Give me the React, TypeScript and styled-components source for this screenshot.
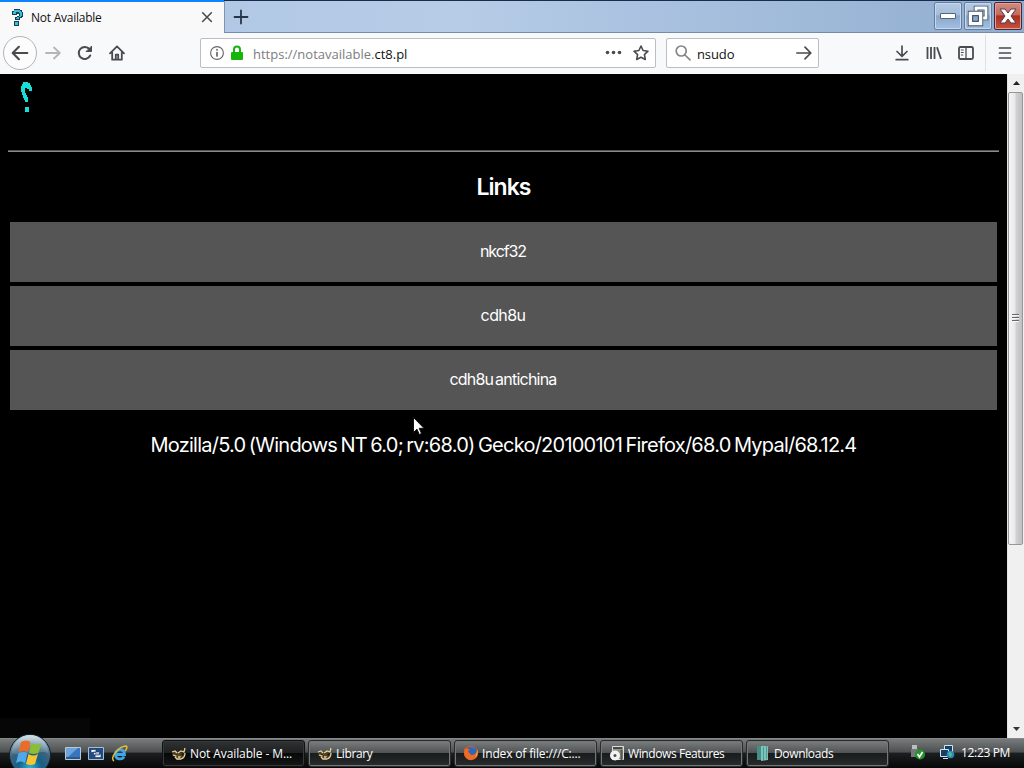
import { ReactNode } from 'react';
import styled, { createGlobalStyle } from 'styled-components';

const GlobalStyle = createGlobalStyle`
	* {
		box-sizing: border-box;
	}
	body {
		margin: 0;
		background: #000;
		overflow: hidden;
		font-family: 'Open Sans', 'Noto Sans', sans-serif;
	}
	svg {
		display: block;
		flex: none;
	}
`;

const Screen = styled.div`
	position: relative;
	display: flex;
	flex-direction: column;
	width: 1024px;
	height: 768px;
	overflow: hidden;
	background: #000;
`;

const Text = styled.span<{ $size?: number; $spacing?: number; $color?: string }>`
	font-size: ${(p) => p.$size ?? 12}px;
	letter-spacing: ${(p) => p.$spacing ?? 0}px;
	color: ${(p) => p.$color ?? '#111'};
	white-space: pre;
`;

/* browser chrome */

const TabStrip = styled.div`
	display: flex;
	height: 33px;
	background: linear-gradient(90deg, #aec6e4 0%, #b6cce7 45%, #a0bad9 78%, #8fadd0 100%);
	border-top: 1px solid #172c4e;
	border-bottom: 1px solid #758ba6;
`;

const Tab = styled.div`
	display: flex;
	align-items: center;
	width: 224px;
	height: 33px;
	margin-top: -1px;
	padding: 0 10px 0 9px;
	background: #f9f9fa;
	border-top: 2px solid #0a84ff;
`;

const TabTitle = styled.div`
	flex: 1;
	padding-left: 6px;
	line-height: 28px;
	margin-top: -2px;
`;

const NewTab = styled.div`
	display: flex;
	align-items: center;
	justify-content: center;
	width: 33px;
	height: 31px;
	border-left: 1px solid #7e94b1;
`;

const WindowControls = styled.div`
	display: flex;
	gap: 2px;
	margin: 1px 2px 0 auto;
`;

const WindowButton = styled.div<{ $close?: boolean }>`
	display: flex;
	align-items: center;
	justify-content: center;
	width: 28px;
	height: 28px;
	border: 1px solid ${(p) => (p.$close ? '#4d2430' : '#657c9b')};
	border-radius: 2px;
	box-shadow: inset 0 0 0 1px ${(p) => (p.$close ? '#dba29c' : '#c7d9ec')};
	background: ${(p) =>
		p.$close
			? 'linear-gradient(#cf8c82 0%, #c46a5d 45%, #a92f20 50%, #c4523e 100%)'
			: 'linear-gradient(#b5cae2 0%, #a3bddc 45%, #87a7cd 50%, #a3c0e0 100%)'};
`;

const NavBar = styled.div`
	display: flex;
	align-items: center;
	height: 41px;
	padding: 0 0 2px 3px;
	background: #f8f9fa;
`;

const BackButton = styled.div`
	display: flex;
	align-items: center;
	justify-content: center;
	width: 34px;
	height: 34px;
	border: 1px solid #b4b4b6;
	border-radius: 50%;
	background: #fcfcfd;
`;

const NavIcon = styled.div<{ $width?: number }>`
	display: flex;
	align-items: center;
	justify-content: center;
	width: ${(p) => p.$width ?? 32}px;
	height: 32px;
`;

const Field = styled.div<{ $width: number; $left: number }>`
	display: flex;
	align-items: center;
	width: ${(p) => p.$width}px;
	height: 30px;
	margin-left: ${(p) => p.$left}px;
	padding: 0 6px 0 8px;
	border: 1px solid #bebec1;
	border-radius: 2px;
	background: #fff;
`;

const FieldText = styled.div<{ $left: number }>`
	flex: 1;
	padding: 2px 0 0 ${(p) => p.$left}px;
	line-height: 28px;
`;

const RightTools = styled.div`
	display: flex;
	align-items: center;
	height: 39px;
	margin-left: auto;
`;

const MenuCell = styled.div`
	display: flex;
	align-items: center;
	justify-content: center;
	width: 39px;
	height: 36px;
	margin-left: 3px;
	border-left: 1px solid #dfe0e2;
`;

/* page */

const Viewport = styled.div`
	display: flex;
	height: 664px;
`;

const Page = styled.main`
	flex: 1;
	padding: 8px;
	background: #000;
	color: #fff;
	text-align: center;
	font-family: Inter, 'Liberation Sans', sans-serif;
`;

const Logo = styled.div`
	height: 68px;
	padding: 0 0 0 11px;
`;

const Rule = styled.hr`
	height: 2px;
	margin: 0;
	border: 0;
	border-top: 1px solid #555;
	border-bottom: 1px solid #8a8a8a;
`;

const Title = styled.h2`
	margin: 20px 0 20px;
	font-size: 23px;
	font-weight: 600;
	line-height: 30px;
	letter-spacing: -1px;
`;

const LinkList = styled.div`
	display: flex;
	flex-direction: column;
	gap: 4px;
	padding: 0 2px;
`;

const LinkButton = styled.div<{ $spacing: number }>`
	height: 60px;
	padding-right: 1px;
	background: #555;
	font-size: 16px;
	line-height: 59px;
	letter-spacing: ${(p) => p.$spacing}px;
	word-spacing: -2px;
`;

const UserAgent = styled.p`
	margin: 20px 0 0;
	font-size: 20px;
	line-height: 31px;
	letter-spacing: -0.76px;
	word-spacing: -1.5px;
	white-space: nowrap;
`;

const Scrollbar = styled.div`
	display: flex;
	flex-direction: column;
	width: 17px;
	background: #f0f0f0;
	border-left: 1px solid #e3e3e3;
`;

const ScrollArrow = styled.div`
	display: flex;
	align-items: center;
	justify-content: center;
	height: 18px;
`;

const Thumb = styled.div`
	display: flex;
	align-items: center;
	justify-content: center;
	height: 453px;
	margin-right: 1px;
	border: 1px solid #979797;
	border-radius: 2px;
	background: linear-gradient(90deg, #f5f5f5 0%, #e9e9eb 45%, #d0d0d2 55%, #c0c0c4 100%);
`;

const Spacer = styled.div`
	flex: 1;
`;

/* taskbar */

const Taskbar = styled.footer`
	position: relative;
	display: flex;
	align-items: flex-start;
	height: 30px;
	padding-left: 65px;
	border-top: 1px solid #858889;
	background: linear-gradient(#777b7c 0%, #4e5152 44%, #1b1e1f 50%, #060808 100%);
`;

const StartOrb = styled.div`
	position: absolute;
	left: 8px;
	top: -6px;
`;

const QuickLaunch = styled.div`
	display: flex;
	gap: 7px;
	width: 97px;
	padding-top: 6px;
`;

const Tasks = styled.div`
	display: flex;
	gap: 3px;
	padding-top: 1px;
`;

const TaskButton = styled.div<{ $active?: boolean }>`
	display: flex;
	align-items: center;
	gap: 3px;
	width: 143px;
	height: 27px;
	padding: 0 0 1px 8px;
	border: 1px solid ${(p) => (p.$active ? '#111' : '#292c2d')};
	border-radius: 3px;
	box-shadow: inset 0 0 0 1px ${(p) => (p.$active ? '#36393a' : '#737778')};
	background: ${(p) =>
		p.$active
			? 'linear-gradient(#303334 0%, #1e2021 46%, #070808 50%, #151718 100%)'
			: 'linear-gradient(#7b7e7f 0%, #515455 46%, #191c1d 50%, #292c2d 100%)'};
`;

const Tray = styled.div`
	display: flex;
	align-items: center;
	gap: 13px;
	height: 25px;
	margin: 0 14px 0 auto;
`;

const Clock = styled.div`
	margin: -2px 0 0 -7px;
`;

const FadingStatus = styled.div`
	position: absolute;
	left: 0;
	top: 718px;
	width: 90px;
	height: 20px;
	background: #060606;
`;

const Cursor = styled.div`
	position: absolute;
	left: 413px;
	top: 417px;
`;

type IconProps = { size?: number; color?: string; width?: number; children: ReactNode };

const LineIcon = ({ size = 16, color = '#4a4a4f', width = 2, children }: IconProps) => (
	<svg
		width={size}
		height={size}
		viewBox="0 0 16 16"
		fill="none"
		stroke={color}
		strokeWidth={width}
		strokeLinecap="round"
		strokeLinejoin="round"
	>
		{children}
	</svg>
);

const Favicon = () => (
	<svg width="16" height="17" viewBox="0 0 16 17" shapeRendering="crispEdges">
		<path
			d="M5 0h6v1h2v2h1v5h-1v1h-2v2H6V8h2V7h2V5H8v1H3V2h2zM5 12h5v5H5z"
			fill="#17414e"
		/>
		<path
			d="M5 1h6v1h1v1h1v4h-1v1h-2v2H7V9h1V8h2V7h1V4h-1V3H7v2H4V3h1zM6 13h3v3H6z"
			fill="#38bfe0"
		/>
	</svg>
);

const PageLogo = () => (
	<svg width="15" height="31" viewBox="0 0 15 31" shapeRendering="crispEdges">
		<path
			d="M4 0h5v1h2v2h1v2h1v4h-3V7H8V6H6v5h1v2h1v2h1v5H6v-2H5v-2H4v-3H3v-3H2V4h1V2h1z"
			fill="#16dfd8"
		/>
		<path d="M6 25h4v5H6z" fill="#16dfd8" />
	</svg>
);

const CatIcon = () => (
	<svg width="16" height="16" viewBox="0 0 16 16">
		<path d="M2 7l4-1 3 2 4-1 1 4-3 3-5 1-2-3-3-2z" fill="#4d3f22" />
		<path
			d="M1 7l3-1 2 2M2 10l3 1 2-1M7 8l3-2 3 1 1-4M14 8c0 3-1 5-4 6H6l-2-2"
			stroke="#e6d09a"
			strokeWidth="1.3"
			fill="none"
		/>
		<path d="M5 9l2 1-1 2zM10 9l3-1-1 3z" fill="#17130c" />
		<path d="M7 11h3l-1 2H7z" fill="#c8b27a" />
	</svg>
);

const FirefoxIcon = () => (
	<svg width="16" height="16" viewBox="0 0 16 16">
		<circle cx="8" cy="8" r="7.2" fill="#e4571d" />
		<circle cx="8.6" cy="6.8" r="5.2" fill="#2b69b8" />
		<path d="M7 2a5 5 0 0 1 5 3 4 4 0 0 0-5-3" fill="#6bb7e6" />
		<path d="M2 3l2 1 3 0-2 2 2 3c2 2 5 1 7-3 1 6-3 9-7 9S-.5 9 2 3" fill="#ef6b22" />
		<path d="M14 4c1 3 1 6-2 9 2-4 2-6 2-9" fill="#fbc53c" />
	</svg>
);

const FeaturesIcon = () => (
	<svg width="16" height="16" viewBox="0 0 16 16">
		<path d="M3.5 1.5h11v13h-11z" fill="#8f9088" stroke="#deded6" />
		<path d="M4 2h9v2H4z" fill="#454b4b" />
		<path d="M11.5 5h2v10h-2z" fill="#56584f" />
		<circle cx="6" cy="10.5" r="5" fill="#f2f4f4" />
		<circle cx="6" cy="10.5" r="1.5" fill="#4a4d4e" />
	</svg>
);

const FolderIcon = () => (
	<svg width="16" height="16" viewBox="0 0 16 16">
		<path d="M2 1h5v14H2z" fill="#448e86" />
		<path d="M6 1h7v14l-7 1z" fill="#7fc3b8" />
		<path d="M8.5 2v13M11.5 1v13" stroke="#4b9b92" />
	</svg>
);

const StartLogo = () => (
	<svg width="44" height="44" viewBox="0 0 44 44">
		<defs>
			<radialGradient id="orb" cx="50%" cy="82%" r="75%">
				<stop offset="0" stopColor="#27b8df" />
				<stop offset="0.38" stopColor="#146089" />
				<stop offset="0.7" stopColor="#3e637d" />
				<stop offset="1" stopColor="#8ba7b7" />
			</radialGradient>
			<linearGradient id="gloss" x1="0" y1="0" x2="0" y2="1">
				<stop offset="0" stopColor="#dce8ee" stopOpacity="0.9" />
				<stop offset="1" stopColor="#8eaaba" stopOpacity="0.25" />
			</linearGradient>
		</defs>
		<circle cx="22" cy="22" r="20.5" fill="url(#orb)" stroke="#10202a" />
		<path d="M4 20a18 18 0 0 1 36 0c-10-4-26 5-36 0" fill="url(#gloss)" />
		<path d="M13 9q5-3 9.5 0l-2.5 10q-4-2-9.5 0z" fill="#ec6b26" />
		<path d="M23.5 10q5 3 10 0l-3 10q-5 2-9.5 0z" fill="#8bbd37" />
		<path d="M10.5 20q5-2 9 0l-2.5 10q-4-3-9 0z" fill="#54a8e8" />
		<path d="M20.5 21q5 3 9.5 0l-3 10q-4 2-9 0z" fill="#fac52c" />
	</svg>
);

const DesktopIcon = () => (
	<svg width="16" height="16" viewBox="0 0 16 16">
		<path d="M.5 2.5h15v12H.5z" fill="#3775bd" stroke="#b9c8d7" />
		<path d="M1 3h12L3 12H1z" fill="#6aa4db" />
		<path d="M1 13h14" stroke="#233d5e" />
	</svg>
);

const SwitcherIcon = () => (
	<svg width="16" height="16" viewBox="0 0 16 16">
		<path d="M.5 2.5h15v12H.5z" fill="#214b83" stroke="#a8bdd4" />
		<path
			d="M3 4.5h5v3H3zM5.5 7h6v3h-6zM7 9h6v3.5H7z"
			fill="#eff6fb"
			stroke="#203e69"
			strokeWidth=".7"
		/>
	</svg>
);

const ExplorerIcon = () => (
	<svg width="17" height="17" viewBox="0 0 17 17" fill="none">
		<path d="M4.5 9.5h9c0-7-9-6-9 0 0 5.5 7 5.5 8.5 2" stroke="#3fa6e8" strokeWidth="2.8" />
		<path d="M3 16C-2 13 8 1 15 1c2 1 0 4-1 5" stroke="#e8bd34" strokeWidth="1.5" />
	</svg>
);

const tasks = [
	{ title: 'Not Available - M...', icon: <CatIcon />, spacing: -0.1, active: true },
	{ title: 'Library', icon: <CatIcon />, spacing: -0.4 },
	{ title: 'Index of file:///C:...', icon: <FirefoxIcon />, spacing: -0.15 },
	{ title: 'Windows Features', icon: <FeaturesIcon />, spacing: -0.4 },
	{ title: 'Downloads', icon: <FolderIcon />, spacing: -0.35 },
];

const links = [
	{ label: 'nkcf32', spacing: -1.1 },
	{ label: 'cdh8u', spacing: -0.6 },
	{ label: 'cdh8u antichina', spacing: -0.77 },
];

const App = () => {
	return (
		<Screen>
			<GlobalStyle />
			<TabStrip>
				<Tab>
					<Favicon />
					<TabTitle>
						<Text $spacing={-0.25}>Not Available</Text>
					</TabTitle>
					<LineIcon size={14} width={1.8}>
						<path d="M3 2l10 10M13 2L3 12" />
					</LineIcon>
				</Tab>
				<NewTab>
					<LineIcon color="#273548" width={1.8}>
						<path d="M8 1.5v13M1.5 8h13" />
					</LineIcon>
				</NewTab>
				<WindowControls>
					<WindowButton>
						<svg width="18" height="8" viewBox="0 0 18 8">
							<path d="M1.5 1.5h15v5h-15z" fill="#fff" stroke="#56657a" />
						</svg>
					</WindowButton>
					<WindowButton>
						<svg width="22" height="22" viewBox="0 0 22 22" fill="none">
							<path d="M9 3h10v10H9z" stroke="#46566b" strokeWidth="4.6" />
							<path d="M9 3h10v10H9z" stroke="#fff" strokeWidth="2.8" />
							<path d="M3.5 8.5h10v10h-10z" fill="#8ba8c8" stroke="#46566b" strokeWidth="5.4" />
							<path d="M3.5 8.5h10v10h-10z" stroke="#fff" strokeWidth="3.6" />
							<path d="M5.5 10.5h6v6h-6z" stroke="#46566b" />
						</svg>
					</WindowButton>
					<WindowButton $close>
						<svg width="20" height="18" viewBox="0 0 20 18">
							<path
								d="M2 2h5l3 4 3-4h5l-5 7 5 7h-5l-3-4-3 4H2l5-7z"
								fill="#fff"
								stroke="#593c46"
							/>
						</svg>
					</WindowButton>
				</WindowControls>
			</TabStrip>
			<NavBar>
				<BackButton>
					<LineIcon size={18} width={1.9}>
						<path d="M14.5 8H1.8M7 2.5L1.5 8 7 13.5" />
					</LineIcon>
				</BackButton>
				<NavIcon>
					<LineIcon color="#b5b5b8" width={1.8}>
						<path d="M1 8h13.5M9 2.5L14.8 8 9 13.5" />
					</LineIcon>
				</NavIcon>
				<NavIcon>
					<LineIcon>
						<path d="M13.2 10.5A6 6 0 1 1 12.5 4.2" />
						<path d="M14.5 1.5v5h-5z" fill="#4a4a4f" strokeWidth="1" />
					</LineIcon>
				</NavIcon>
				<NavIcon>
					<LineIcon width={1.8}>
						<path d="M1 8.3L8 1.4l7 6.9M3.2 7.5v7.2h9.6V7.5" />
						<path d="M6.8 14V9.6h2.4V14" strokeWidth="1.8" />
					</LineIcon>
				</NavIcon>
				<Field $width={456} $left={67}>
					<LineIcon color="#66666a" width={1.1}>
						<circle cx="8" cy="8" r="6.4" />
						<path d="M8 7.5v3.5M8 4.6v.3" strokeWidth="1.7" />
					</LineIcon>
					<NavIcon $width={24}>
						<svg width="14" height="16" viewBox="0 0 14 16">
							<path d="M4 8V4.5a3 3 0 0 1 6 0V8" fill="none" stroke="#16b50a" strokeWidth="2" />
							<rect x="1" y="7" width="12" height="8" rx="1" fill="#16b50a" />
						</svg>
					</NavIcon>
					<FieldText $left={4}>
						<Text $size={13} $spacing={0} $color="#7d7d80">
							https://notavailable.
						</Text>
						<Text $size={13} $spacing={0}>
							ct8.pl
						</Text>
					</FieldText>
					<NavIcon $width={38}>
						<svg width="17" height="5" viewBox="0 0 17 5" fill="#4a4a4f">
							<circle cx="2.5" cy="2.5" r="1.8" />
							<circle cx="8.5" cy="2.5" r="1.8" />
							<circle cx="14.5" cy="2.5" r="1.8" />
						</svg>
					</NavIcon>
					<NavIcon $width={17}>
						<LineIcon width={1.6}>
							<path d="M8 1l2.1 4.5 4.9.7-3.6 3.4.9 4.9L8 12.2l-4.3 2.3.9-4.9L1 6.2l4.9-.7z" />
						</LineIcon>
					</NavIcon>
				</Field>
				<Field $width={153} $left={10}>
					<LineIcon color="#858588" width={1.7}>
						<circle cx="6.2" cy="6" r="5" />
						<path d="M10 10l5 4.8" />
					</LineIcon>
					<FieldText $left={6}>
						<Text $size={13} $spacing={-0.1}>
							nsudo
						</Text>
					</FieldText>
					<LineIcon width={1.7}>
						<path d="M.8 8h14M9 2.2L14.8 8 9 13.8" />
					</LineIcon>
				</Field>
				<RightTools>
					<NavIcon>
						<LineIcon width={1.7}>
							<path d="M8 1v10M3 6.5L8 11.3l5-4.8M2.2 14.7h11.6" />
						</LineIcon>
					</NavIcon>
					<NavIcon>
						<LineIcon width={1.8}>
							<path d="M1.5 2v12M5 2v12M8.5 2v12M11 2.2l4 11.7" strokeLinecap="butt" />
						</LineIcon>
					</NavIcon>
					<NavIcon>
						<LineIcon width={1.8}>
							<rect x="1" y="2" width="14" height="12" rx="1.5" />
							<path d="M8 2v12" strokeWidth="1.3" />
							<path d="M3.3 5h2M3.3 7.5h2M3.3 10h1.5" strokeWidth="1" />
						</LineIcon>
					</NavIcon>
					<MenuCell>
						<LineIcon width={1.7}>
							<path d="M2.5 3h11M2.5 8h11M2.5 13h11" />
						</LineIcon>
					</MenuCell>
				</RightTools>
			</NavBar>
			<Viewport>
				<Page>
					<Logo>
						<PageLogo />
					</Logo>
					<Rule />
					<Title>Links</Title>
					<LinkList>
						{links.map((link) => (
							<LinkButton key={link.label} $spacing={link.spacing}>
								{link.label}
							</LinkButton>
						))}
					</LinkList>
					<UserAgent>
						Mozilla/5.0 (Windows NT 6.0; rv:68.0) Gecko/20100101 Firefox/68.0 Mypal/68.12.4
					</UserAgent>
				</Page>
				<Scrollbar>
					<ScrollArrow>
						<svg width="7" height="4" viewBox="0 0 7 4">
							<path d="M0 4l3.5-4L7 4z" fill="#222" />
						</svg>
					</ScrollArrow>
					<Thumb>
						<svg width="7" height="9" viewBox="0 0 7 9" shapeRendering="crispEdges">
							<path d="M0 .5h7M0 3.5h7M0 6.5h7" stroke="#66666a" />
							<path d="M0 1.5h7M0 4.5h7M0 7.5h7" stroke="#f7f7f7" />
						</svg>
					</Thumb>
					<Spacer />
					<ScrollArrow>
						<svg width="7" height="4" viewBox="0 0 7 4">
							<path d="M0 0h7L3.5 4z" fill="#333" />
						</svg>
					</ScrollArrow>
				</Scrollbar>
			</Viewport>
			<FadingStatus />
			<Taskbar>
				<StartOrb>
					<StartLogo />
				</StartOrb>
				<QuickLaunch>
					<DesktopIcon />
					<SwitcherIcon />
					<ExplorerIcon />
				</QuickLaunch>
				<Tasks>
					{tasks.map((task) => (
						<TaskButton key={task.title} $active={task.active}>
							{task.icon}
							<Text $spacing={task.spacing} $color="#fff">
								{task.title}
							</Text>
						</TaskButton>
					))}
				</Tasks>
				<Tray>
					<svg width="16" height="16" viewBox="0 0 16 16">
						<path d="M2 1h5v4H2z" fill="#bdbdbd" />
						<path d="M1 5h7v8H1z" fill="#74777b" />
						<circle cx="10" cy="10.5" r="5" fill="#24942b" />
						<path d="M7.5 10l2 3 3-5" fill="none" stroke="#fff" strokeWidth="1.6" />
					</svg>
					<svg width="16" height="16" viewBox="0 0 16 16">
						<path d="M5.5 1.5h8v7h-8z" fill="#153f68" stroke="#d5e5ef" />
						<path d="M1.5 5.5h8v7h-8zM4 14.5h5" fill="#163e66" stroke="#d5e5ef" />
						<circle cx="11.5" cy="10.5" r="3.8" fill="#268ac0" />
						<path d="M9 9l3-1 1 3-2 2z" fill="#57bd83" />
					</svg>
					<Clock>
						<Text $spacing={-0.35} $color="#fff">
							12:23 PM
						</Text>
					</Clock>
				</Tray>
			</Taskbar>
			<Cursor>
				<svg width="12" height="19" viewBox="0 0 12 19">
					<path d="M.5.5v15l3.5-3.3 2.3 5.3 2.2-1-2.3-5.2H11z" fill="#fff" stroke="#111" />
				</svg>
			</Cursor>
		</Screen>
	);
};

export default App;
